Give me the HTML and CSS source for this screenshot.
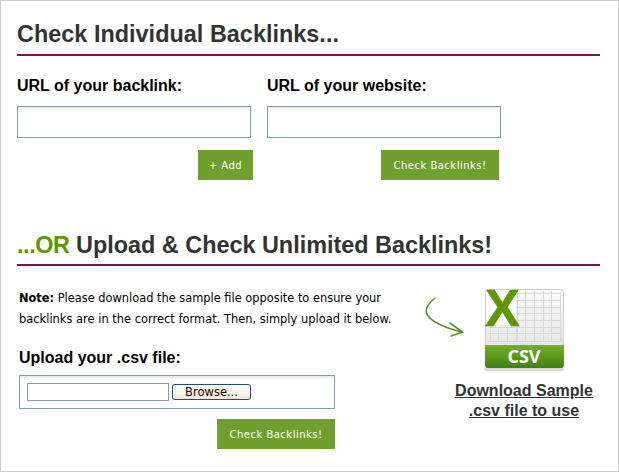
FILE: index.html
```html
<!DOCTYPE html>
<html lang="en">
<head>
<meta charset="utf-8">
<title>Check Backlinks</title>
<link rel="stylesheet" href="styles.css">
</head>
<body>
<main class="frame">
  <section class="individual">
    <h2 class="heading">Check Individual Backlinks...</h2>
    <div class="url-columns">
      <div class="url-col url-col-a">
        <label class="label">URL of your backlink:</label>
        <input class="field" type="text">
        <div class="actions actions-a"><button class="go go-add">+ Add</button></div>
      </div>
      <div class="url-col url-col-b">
        <label class="label">URL of your website:</label>
        <input class="field" type="text">
        <div class="actions actions-b"><button class="go go-check">Check Backlinks!</button></div>
      </div>
    </div>
  </section>
  <section class="upload">
    <h2 class="heading"><span class="or">...OR</span> Upload &amp; Check Unlimited Backlinks!</h2>
    <div class="upload-columns">
      <div class="upload-main">
        <p class="note"><b>Note:</b> Please download the sample file opposite to ensure your<br><span class="note-second">backlinks are in the correct format. Then, simply upload it below.</span></p>
        <label class="label label-upload">Upload your .csv file:</label>
        <div class="file-box">
          <span class="file-name"></span>
          <span class="browse">Browse...</span>
        </div>
        <div class="actions actions-upload"><button class="go go-check">Check Backlinks!</button></div>
      </div>
      <div class="sample">
        <svg class="arrow" width="40" height="42" viewBox="0 0 40 42">
          <path d="M10 1 C4 6 0 11 1.500 16 C4 24 20 31 37 35" fill="none" stroke="#5b9028" stroke-width="1.600" stroke-linecap="round"/>
          <path d="M25 26 L37.500 35 L26 39" fill="none" stroke="#5b9028" stroke-width="1.600" stroke-linecap="round"/>
        </svg>
        <div class="sample-col">
          <svg class="csv" width="82" height="84" viewBox="0 0 82 84">
            <defs>
              <linearGradient id="page" x1="0" y1="0" x2="0" y2="1"><stop offset="0" stop-color="#fbfbfb"/><stop offset="1" stop-color="#dedede"/></linearGradient>
              <linearGradient id="band" x1="0" y1="0" x2="0" y2="1"><stop offset="0" stop-color="#74ad28"/><stop offset="0.500" stop-color="#5c9a1c"/><stop offset="1" stop-color="#3f7f14"/></linearGradient>
            </defs>
            <rect x="1" y="79" width="80" height="4" rx="2" fill="#d9d9d9"/>
            <rect x="2.500" y="1.500" width="78" height="78" rx="3" fill="url(#page)" stroke="#cfcfcf"/>
            <path d="M32 5.500H78M32 12.500H78M32 19.500H78M32 25.500H78M32 32.500H78M5 39.500H78M5 45.500H78M5 53.500H78M34.500 3V54M42.500 3V54M51.500 3V54M60.500 3V54M68.500 3V54M77.500 3V54M7.500 39V54M15.500 39V54M24.500 39V54M33.500 39V54" fill="none" stroke="#d6d6d6"/>
            <path d="M3 5Q3 2 6 2H33V37H3Z" fill="#fff"/>
            <text class="csv-x" x="2" y="38">X</text>
            <path d="M2 57H81V76Q81 80 78 80H5Q2 80 2 76Z" fill="url(#band)"/>
            <text class="csv-label" x="41" y="75">CSV</text>
          </svg>
          <a class="sample-link" href="#">Download Sample<br>.csv file to use</a>
        </div>
      </div>
    </div>
  </section>
</main>
</body>
</html>
```
FILE: styles.css
```css
* { box-sizing: border-box; }
html, body { margin: 0; padding: 0; background: #fff; }
.frame {
  width: 619px;
  height: 472px;
  border: 1px solid #ccc;
  padding: 0 18px 0 16px;
  font-family: "Liberation Sans", Arial, sans-serif;
  overflow: hidden;
}
.heading {
  margin: 0;
  padding-top: 18px;
  border-bottom: 2px solid #7d1259;
  color: #333;
  font-size: 23.400px;
  line-height: 30px;
  font-weight: bold;
  white-space: nowrap;
}
.individual { height: 209px; }
.individual .heading { height: 55px; letter-spacing: 0.030px; }
.upload .heading { height: 56px; padding-top: 20px; }
.or { color: #5f9700; letter-spacing: -0.400px; }
.url-columns { display: flex; padding-top: 20px; }
.url-col { display: flex; flex-direction: column; }
.url-col-a { width: 250px; }
.url-col-b { width: 234px; }
.label {
  display: block;
  color: #000;
  font-size: 16px;
  line-height: 20px;
  font-weight: bold;
}
.field {
  display: block;
  width: 234px;
  height: 32px;
  margin-top: 10px;
  border: 1px solid #7f9db9;
  background: #fff;
  box-shadow: inset 0 4px 4px -3px #ddd;
  padding: 0 4px;
}
.actions { display: flex; margin-top: 12px; }
.actions-a { padding-left: 181px; width: 236px; }
.actions-b { justify-content: flex-end; padding-right: 2px; }
.go {
  display: block;
  height: 30px;
  border: 0;
  padding: 0;
  background: #6f9f2d;
  color: #fff;
  font-family: "DejaVu Sans", Verdana, sans-serif;
  font-size: 10px;
  letter-spacing: 0.500px;
  text-align: center;
}
.go-add { width: 55px; }
.go-check { width: 118px; }
.upload-columns { display: flex; padding-left: 2px; }
.upload-main { width: 385px; flex: none; }
.note {
  margin: 22px 0 0;
  color: #000;
  font-family: "DejaVu Sans", Tahoma, sans-serif;
  font-size: 11.400px;
  line-height: 21px;
  white-space: nowrap;
}
.note-second { letter-spacing: 0.030px; }
.label-upload { margin-top: 18px; }
.file-box {
  display: flex;
  align-items: center;
  gap: 3px;
  width: 316px;
  height: 34px;
  margin-top: 7px;
  padding-left: 7px;
  border: 1px solid #7f9db9;
  box-shadow: inset 0 4px 4px -3px #ddd;
}
.file-name {
  display: block;
  width: 142px;
  height: 18px;
  border: 1px solid #7f9db9;
  background: #fff;
}
.browse {
  display: block;
  width: 79px;
  height: 16px;
  border: 1px solid #1c4f7c;
  border-radius: 3px;
  background: linear-gradient(#fff, #ece9d8);
  color: #300;
  font-family: "DejaVu Sans", Tahoma, sans-serif;
  font-size: 11.500px;
  line-height: 14px;
  text-align: center;
}
.actions-upload { justify-content: flex-end; width: 316px; margin-top: 10px; }
.sample { position: relative; flex: none; padding-left: 50px; }
.arrow { position: absolute; left: 21px; top: 31px; }
.sample-col {
  display: flex;
  flex-direction: column;
  align-items: center;
  width: 140px;
  padding-top: 22px;
}
.csv { display: block; overflow: visible; }
.csv-x { font-family: "Liberation Sans", Arial, sans-serif; font-weight: bold; font-size: 52px; fill: #5f9700; stroke: #5f9700; stroke-width: 0.600px; }
.csv-label { font-family: "Open Sans", "DejaVu Sans", sans-serif; font-weight: bold; font-size: 18px; fill: #fff; text-anchor: middle; }
.sample-link {
  display: block;
  margin-top: 9px;
  color: #333;
  font-size: 16px;
  line-height: 20px;
  font-weight: bold;
  text-align: center;
  white-space: nowrap;
}
```
